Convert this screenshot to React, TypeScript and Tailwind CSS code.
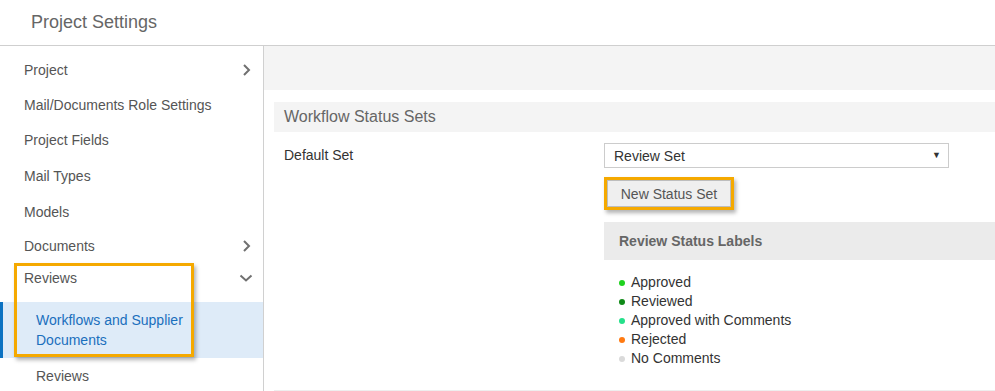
const navItems: { label: string; h: string; chevron?: 'right' | 'down' }[] = [
  { label: 'Project', h: 'h-[36px]', chevron: 'right' },
  { label: 'Mail/Documents Role Settings', h: 'h-[34px]' },
  { label: 'Project Fields', h: 'h-[36px]' },
  { label: 'Mail Types', h: 'h-[36px]' },
  { label: 'Models', h: 'h-[36px]' },
  { label: 'Documents', h: 'h-[32px]', chevron: 'right' },
  { label: 'Reviews', h: 'h-[32px]', chevron: 'down' },
]

const statuses = [
  { label: 'Approved', dot: 'bg-[#1fd21f]' },
  { label: 'Reviewed', dot: 'bg-[#0f8a17]' },
  { label: 'Approved with Comments', dot: 'bg-[#24e08a]' },
  { label: 'Rejected', dot: 'bg-[#ff7a12]' },
  { label: 'No Comments', dot: 'bg-[#dadada]' },
]

function Chevron({ dir }: { dir: 'right' | 'down' }) {
  return dir === 'right' ? (
    <svg width="12" height="14" viewBox="0 0 12 14" className="text-[#707070]">
      <path d="M3 2l5 5-5 5" fill="none" stroke="currentColor" strokeWidth="2" />
    </svg>
  ) : (
    <svg width="14" height="10" viewBox="0 0 14 10" className="text-[#707070]">
      <path d="M1.5 2.5l5.5 5 5.5-5" fill="none" stroke="currentColor" strokeWidth="2" />
    </svg>
  )
}

export default function App() {
  return (
    <div className="flex h-[391px] w-[995px] flex-col overflow-hidden bg-white font-['Liberation_Sans',Arial,sans-serif]">
      <header className="flex h-[46px] shrink-0 items-center border-b border-[#cfcfcf] pl-[31px]">
        <h1 className="text-[18px] text-[#666]">Project Settings</h1>
      </header>

      <div className="flex min-h-0 flex-1">
        <aside className="relative w-[264px] shrink-0 border-r border-[#d0d0d0] pt-[6px]">
          {navItems.map((item) => (
            <div className={`flex items-center justify-between pl-[24px] pr-[10px] text-[14px] text-[#555] ${item.h}`} key={item.label}>
              <span>{item.label}</span>
              {item.chevron ? <Chevron dir={item.chevron} /> : null}
            </div>
          ))}
          <div className="mt-[8px] flex h-[56px] flex-col justify-center border-l-[3px] border-[#0b72c2] bg-[#deebf8] pl-[33px] text-[14px] leading-[20px] text-[#1a6fbd]">
            <span>Workflows and Supplier</span>
            <span>Documents</span>
          </div>
          <div className="flex h-[36px] items-center pl-[36px] text-[14px] text-[#555]">Reviews</div>

          <div className="pointer-events-none absolute left-[14px] top-[217px] h-[94px] w-[180px] border-[3px] border-[#f5a900] shadow-[2px_3px_4px_rgba(0,0,0,0.3)]" />
        </aside>

        <main className="flex min-w-0 flex-1 flex-col">
          <div className="h-[44px] shrink-0 bg-[#f4f4f4]" />
          <div className="flex flex-1 flex-col pl-[10px] pt-[12px]">
            <section className="border-b border-[#eeeeee] pb-[22px]">
              <div className="flex h-[30px] items-center bg-[#f4f4f4] pl-[10px] text-[16px] text-[#666]">Workflow Status Sets</div>

              <div className="flex pt-[11px]">
                <div className="w-[330px] shrink-0 pl-[10px] pt-[2px] text-[14px] text-[#333]">Default Set</div>
                <div className="flex flex-1 flex-col items-start">
                  <div className="flex h-[25px] w-[345px] items-center justify-between border border-[#ccc] bg-white pl-[9px] pr-[7px] pt-[1px] text-[14px] text-[#333]">
                    <span>Review Set</span>
                    <span className="text-[9px] text-[#333]">▼</span>
                  </div>

                  <div className="mt-[9px] border-[3px] border-[#f5a900] shadow-[2px_3px_4px_rgba(0,0,0,0.3)]">
                    <button className="flex h-[27px] w-[124px] items-center justify-center border border-[#bdbdbd] bg-[#efefef] pt-[2px] text-[14px] text-[#555]" type="button">
                      New Status Set
                    </button>
                  </div>

                  <div className="mt-[12px] flex h-[38px] w-full items-center bg-[#ebebeb] pl-[15px] text-[14px] font-bold text-[#666]">
                    Review Status Labels
                  </div>

                  <ul className="pl-[15px] pt-[13px]">
                    {statuses.map((s) => (
                      <li className="flex h-[19px] items-center text-[14px] text-[#333]" key={s.label}>
                        <span className={`mr-[6px] h-[6px] w-[6px] rounded-full ${s.dot}`} />
                        {s.label}
                      </li>
                    ))}
                  </ul>
                </div>
              </div>
            </section>
          </div>
        </main>
      </div>
    </div>
  )
}
